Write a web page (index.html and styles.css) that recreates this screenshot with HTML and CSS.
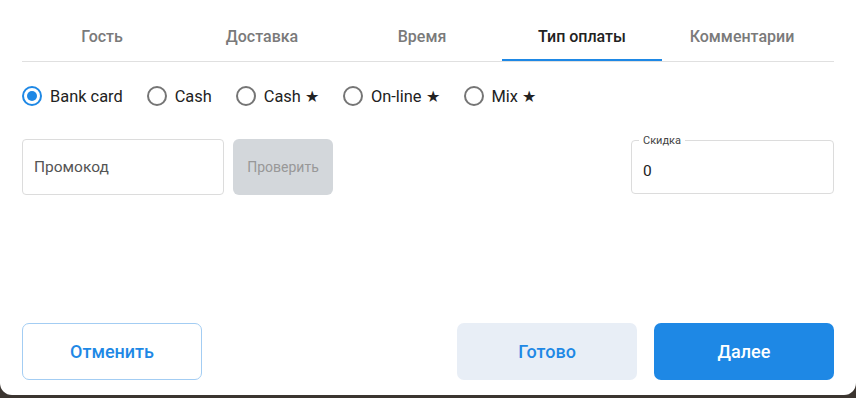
FILE: index.html
```html
<!DOCTYPE html>
<html lang="ru">
<head>
    <meta charset="UTF-8">
    <meta name="viewport" content="width=device-width, initial-scale=1.0">
    <title>Тип оплаты</title>
    <link rel="stylesheet" href="styles.css">
</head>
<body>
    <div class="dialog">
        <div class="tabs">
            <div class="tab">Гость</div>
            <div class="tab">Доставка</div>
            <div class="tab">Время</div>
            <div class="tab active">Тип оплаты</div>
            <div class="tab">Комментарии</div>
        </div>

        <div class="payTypes">
            <label class="radio"><span class="dot checked"></span>Bank card</label>
            <label class="radio"><span class="dot"></span>Cash</label>
            <label class="radio"><span class="dot"></span>Cash ★</label>
            <label class="radio"><span class="dot"></span>On-line ★</label>
            <label class="radio"><span class="dot"></span>Mix ★</label>
        </div>

        <div class="formRow">
            <div class="promo">
                <div class="promoInput">Промокод</div>
                <div class="checkBtn">Проверить</div>
            </div>
            <div class="discount">
                <span class="discountLabel">Скидка</span>
                <span class="discountValue">0</span>
            </div>
        </div>

        <div class="footer">
            <div class="btn cancel">Отменить</div>
            <div class="footerRight">
                <div class="btn done">Готово</div>
                <div class="btn next">Далее</div>
            </div>
        </div>
    </div>
</body>
</html>
```

FILE: styles.css
```css
*{padding: 0; margin: 0; box-sizing: border-box;}

body{
    background-color: #3b3530;
    font-family: Roboto, "Noto Sans", sans-serif;
    color: #222;
}

.dialog{
    height: 395px;
    background-color: #fff;
    border-radius: 0 0 12px 12px;
    padding: 0 22px 15px;
    display: flex;
    flex-direction: column;
}

/* вкладки */
.tabs{
    display: flex;
    padding-top: 13px;
    border-bottom: 1px solid #e0e0e0;
}
.tab{
    width: 160px;
    height: 48px;
    line-height: 48px;
    text-align: center;
    font-size: 16px;
    font-weight: 500;
    color: #7a7a7a;
    border-bottom: 2px solid transparent;
}
.tab.active{
    color: #222;
    border-bottom-color: #1e88e5;
}

/* способ оплаты */
.payTypes{
    display: flex;
    margin-top: 24px;
    gap: 24px;
}
.radio{
    display: flex;
    align-items: center;
    gap: 8px;
    font-size: 16.4px;
    height: 20px;
    color: #222;
}
.dot{
    width: 20px;
    height: 20px;
    border: 2px solid #757575;
    border-radius: 50%;
    display: flex;
    align-items: center;
    justify-content: center;
}
.dot.checked{
    border-color: #1e88e5;
}
.dot.checked::after{
    content: "";
    width: 10px;
    height: 10px;
    border-radius: 50%;
    background-color: #1e88e5;
}

/* промокод и скидка */
.formRow{
    display: flex;
    justify-content: space-between;
    margin-top: 33px;
}
.promo{
    display: flex;
    gap: 9px;
}
.promoInput{
    width: 202px;
    height: 56px;
    border: 1px solid #dcdcdc;
    border-radius: 4px;
    padding-left: 11px;
    line-height: 54px;
    font-size: 15.5px;
    color: #555;
}
.checkBtn{
    width: 100px;
    height: 56px;
    border-radius: 6px;
    background-color: #d3d7db;
    color: #989898;
    font-size: 14px;
    line-height: 56px;
    text-align: center;
}
.discount{
    position: relative;
    width: 203px;
    height: 54px;
    margin-top: 1px;
    border: 1px solid #dcdcdc;
    border-radius: 4px;
    padding-left: 11px;
    line-height: 60px;
    font-size: 15.5px;
}
.discountLabel{
    position: absolute;
    top: -7px;
    left: 7px;
    padding: 0 4px;
    background-color: #fff;
    font-size: 11px;
    line-height: 14px;
    color: #444;
}

/* кнопки */
.footer{
    margin-top: auto;
    display: flex;
    justify-content: space-between;
}
.footerRight{
    display: flex;
    gap: 17px;
}
.btn{
    width: 180px;
    height: 57px;
    border-radius: 7px;
    text-align: center;
    line-height: 57px;
    font-size: 18px;
    font-weight: 500;
    color: #1e88e5;
}
.cancel{
    border: 1px solid #a3cdf3;
    line-height: 55px;
}
.done{
    background-color: #e8eef6;
}
.next{
    background-color: #1e88e5;
    color: #fff;
}
```
